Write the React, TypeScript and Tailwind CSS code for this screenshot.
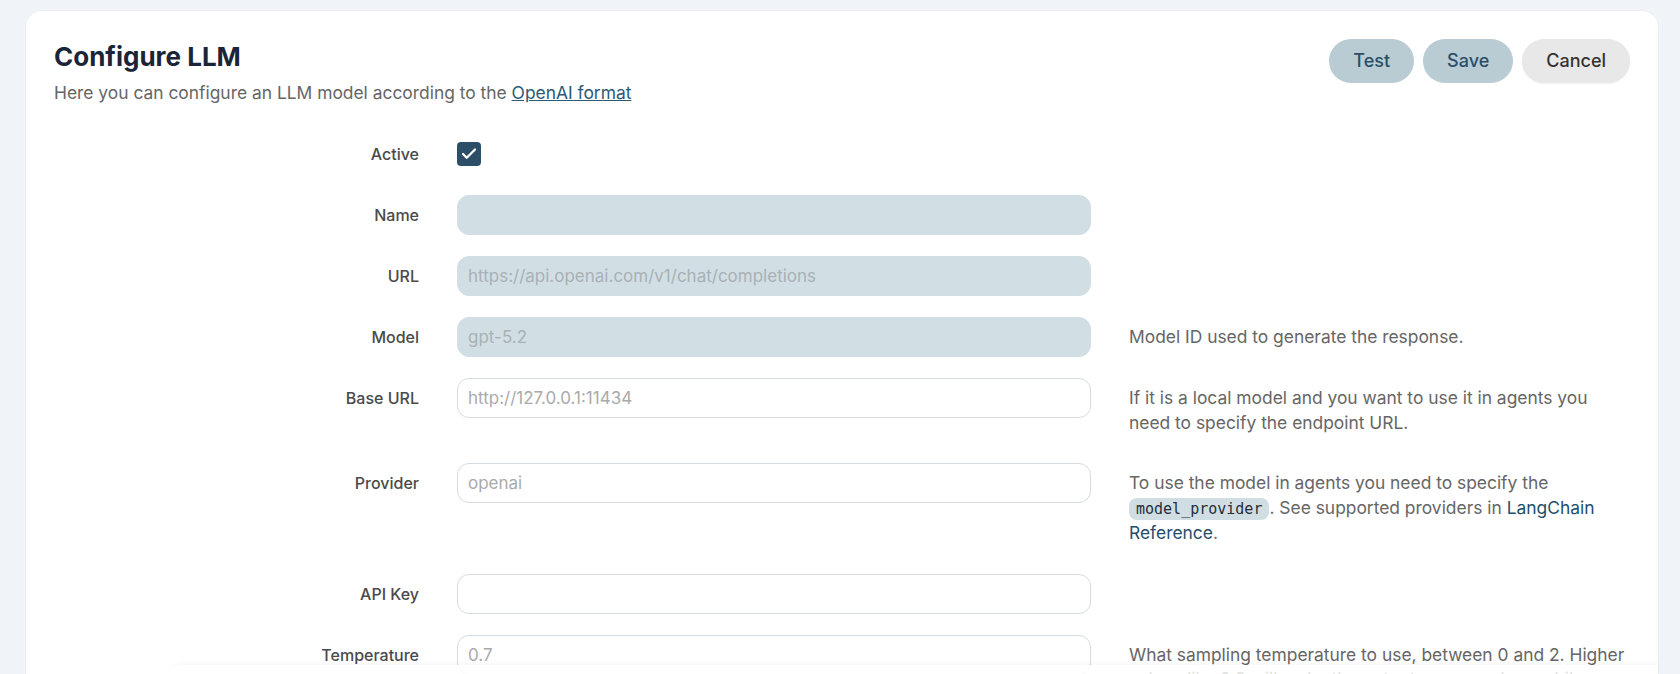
import { Check } from 'lucide-react';

type Field = {
  label: string;
  placeholder?: string;
  disabled?: boolean;
  help?: React.ReactNode;
};

const fields: Field[] = [
  { label: 'Name', disabled: true },
  { label: 'URL', placeholder: 'https://api.openai.com/v1/chat/completions', disabled: true },
  { label: 'Model', placeholder: 'gpt-5.2', disabled: true, help: 'Model ID used to generate the response.' },
  {
    label: 'Base URL',
    placeholder: 'http://127.0.0.1:11434',
    help: 'If it is a local model and you want to use it in agents you need to specify the endpoint URL.',
  },
  {
    label: 'Provider',
    placeholder: 'openai',
    help: (
      <>
        To use the model in agents you need to specify the{' '}
        <code className="rounded-lg bg-[#d0dde3] px-[7px] py-[2px] font-['DejaVu_Sans_Mono',monospace] text-[15px] text-[#1f2d38]">
          model_provider
        </code>
        . See supported providers in{' '}
        <a href="#" className="text-[#1f4f6b]">
          LangChain Reference
        </a>
        .
      </>
    ),
  },
  { label: 'API Key' },
  {
    label: 'Temperature',
    placeholder: '0.7',
    help: 'What sampling temperature to use, between 0 and 2. Higher values like 0.8 will make the output more random, while lower values like 0.2 will make it more focused and deterministic.',
  },
];

export default function App() {
  return (
    <div className="min-h-screen bg-[#f0f4f9] pl-[26px] pr-[22px] pt-[11px] font-['Inter',sans-serif]">
      <div className="rounded-2xl bg-white p-7 pb-16 shadow-[0_0_0_1px_rgba(0,0,0,0.02)]">
        <div className="flex items-start justify-between">
          <div>
            <h1 className="text-[26px] font-bold leading-9 text-[#1b2536]">Configure LLM</h1>
            <p className="mt-1.5 text-[17.4px] leading-6 text-[#666]">
              Here you can configure an LLM model according to the{' '}
              <a href="#" className="text-[#2c5a75] underline">
                OpenAI format
              </a>
            </p>
          </div>
          <div className="flex gap-[9px]">
            <button className="h-11 rounded-full bg-[#b9cbd3] px-6 text-lg font-medium text-[#2b4f66]">Test</button>
            <button className="h-11 rounded-full bg-[#b9cbd3] px-6 text-lg font-medium text-[#2b4f66]">Save</button>
            <button className="h-11 rounded-full bg-[#e8e8e8] px-6 text-lg font-medium text-[#333] shadow-[0_1px_2px_rgba(0,0,0,0.06)]">
              Cancel
            </button>
          </div>
        </div>

        <div className="mt-[29px] grid grid-cols-[365px_634px_1fr] gap-x-[38px] gap-y-[21px]">
          <div className="flex h-10 items-center justify-end text-base font-medium text-[#4a4a4a]">Active</div>
          <div className="flex h-10 items-center">
            <span className="flex h-6 w-6 items-center justify-center rounded-[4px] bg-[#2c4f67]">
              <Check className="h-[18px] w-[18px] text-white" strokeWidth={3} />
            </span>
          </div>
          <div />

          {fields.map((f) => (
            <div key={f.label} className="contents">
              <div className="flex h-10 items-center justify-end text-base font-medium text-[#4a4a4a]">{f.label}</div>
              <input
                placeholder={f.placeholder}
                className={
                  f.disabled
                    ? 'h-10 w-full rounded-xl border border-[#d1dee4] bg-[#d1dee4] px-2.5 text-[17px] text-[#333] outline-none placeholder:text-[#a9b1b5]'
                    : 'h-10 w-full rounded-xl border border-[#d5dbe1] bg-white px-2.5 text-[17px] text-[#333] outline-none placeholder:text-[#aaaaaa]'
                }
              />
              <div className="pt-2 pr-[2px] pb-[7px] text-[17.4px] leading-[24.5px] text-[#666]">{f.help}</div>
            </div>
          ))}
        </div>
      </div>

      <div className="fixed bottom-0 left-[171px] right-[22px] h-[9px] rounded-tl-2xl bg-white/80 shadow-[0_-2px_6px_rgba(0,0,0,0.03)]" />
    </div>
  );
}
